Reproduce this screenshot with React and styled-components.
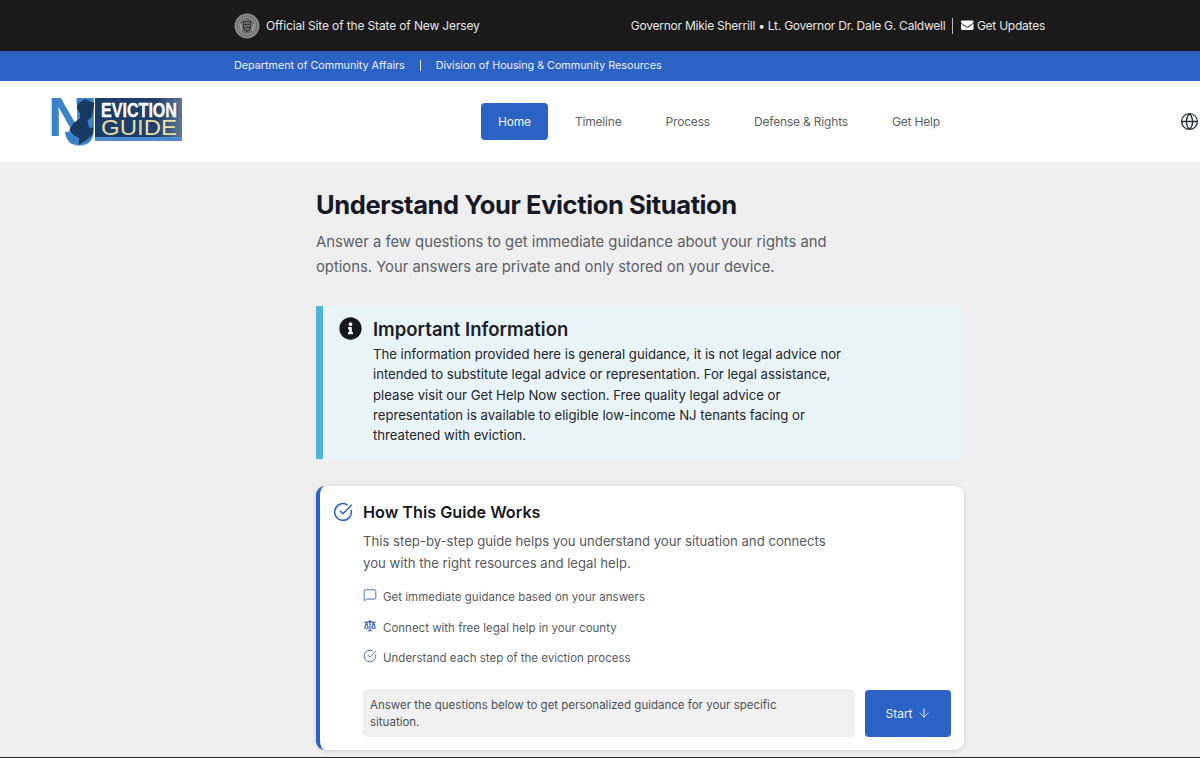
import React from "react";
import styled, { createGlobalStyle } from "styled-components";
import { CircleCheckBig, MessageSquare, Globe, ArrowDown } from "lucide-react";
import { HiOutlineScale } from "react-icons/hi";
import { FaEnvelope, FaInfoCircle } from "react-icons/fa";

const Global = createGlobalStyle`
  html, body { margin: 0; padding: 0; }
  body { font-family: Inter, "Liberation Sans", sans-serif; background: #efefef; color: #1b1e28; }
  * { box-sizing: border-box; }
`;
const Page = styled.div`
  height: 758px; overflow: hidden; display: flex; flex-direction: column; background: #efefef;
`;
const TopBar = styled.div`
  height: 51px; flex: none; background: #1a1a1a; color: #e6e6e6; display: flex; align-items: center;
  justify-content: space-between; padding: 0 155px 0 234px; font-size: 12px;
`;
const TopGroup = styled.div`display: flex; align-items: center; letter-spacing: ${p => p.$tight}px;`;
const SealWrap = styled.svg`width: 26px; height: 26px; margin-right: 6px; display: block;`;
const Divider = styled.span`width: 1px; height: 16px; background: #bbb; margin: 0 8px 0 7px;`;
const Updates = styled.span`display: inline-flex; align-items: center; gap: 3px; svg { font-size: 12.5px; color: #fff; }`;
const SubBar = styled.div`
  height: 30px; flex: none; background: #2b62c4; color: #e9f0fb; display: flex; align-items: center;
  padding: 0 0 1px 234px; font-size: 10.8px; letter-spacing: -0.03px;
`;
const SubSep = styled.span`width: 1px; height: 11px; background: #dfe8f7; margin: 0 15px 0 15px;`;
const NavBar = styled.header`
  height: 81px; flex: none; background: #fff; display: flex; align-items: center; padding: 0 1px 0 51px;
`;
const Logo = styled.svg`width: 132px; height: 50px; display: block; flex: none; overflow: visible;`;
const Nav = styled.nav`display: flex; align-items: center; gap: 10px; margin-left: 298px;`;
const NavItem = styled.a`
  height: 37px; padding: 0 17px; display: flex; align-items: center; font-size: 12px; letter-spacing: -0.18px; border-radius: 4px;
  color: ${p => (p.$active ? "#f2f6fd" : "#5c5f66")}; background: ${p => (p.$active ? "#2b62c4" : "transparent")};
`;
const GlobeBtn = styled.span`margin-left: auto; display: flex; color: #2a2d33;`;
const Main = styled.main`flex: 1; min-height: 0; width: 648px; margin-left: 316px; padding-top: 27px;`;
const H1 = styled.h1`font-size: 25.5px; line-height: 32px; font-weight: 700; letter-spacing: -0.4px; margin: 0 0 9px; color: #171a26;`;
const Lead = styled.p`font-size: 14.8px; line-height: 25px; margin: 0 0 26px; color: #5b5e66; width: 530px;`;
const InfoBox = styled.section`
  height: 153px; background: #e9f4f8; border-left: 7px solid #4fb4dc; padding: 11px 0 0 16px; display: flex; gap: 11px;
`;
const InfoIcon = styled.span`display: flex; font-size: 23px; color: #16181d; height: 23px;`;
const InfoTitle = styled.h2`font-size: 18.5px; line-height: 24px; font-weight: 600; margin: 0 0 3px; color: #1b1e28;`;
const InfoText = styled.p`font-size: 13.15px; line-height: 20.25px; margin: 0; width: 476px; color: #22252c;`;
const Card = styled.section`
  height: 264px; margin-top: 27px; background: #fff; border-left: 4px solid #2b62c4; border-radius: 9px;
  box-shadow: 0 1px 4px rgba(0,0,0,.14); padding: 13px 13px 0 13px; display: flex; gap: 10px;
`;
const CardIcon = styled.span`display: flex; color: #2b62c4; padding-top: 3px;`;
const CardBody = styled.div`flex: 1; min-width: 0;`;
const CardTitle = styled.h2`font-size: 16.2px; line-height: 26px; font-weight: 600; margin: 0 0 5px; color: #171a26;`;
const CardText = styled.p`font-size: 13.15px; line-height: 22px; margin: 0 0 8px; width: 480px; color: #565962;`;
const List = styled.ul`list-style: none; padding: 0; margin: 0;`;
const Item = styled.li`
  height: 30.5px; display: flex; align-items: center; gap: 6px; font-size: 11.5px; color: #565962;
`;
const ItemIcon = styled.span`display: flex; width: 14px; color: #2b62c4; margin-top: -4px; justify-content: center;`;
const Bottom = styled.div`display: flex; gap: 10px; margin-top: 15px;`;
const Note = styled.div`
  flex: 1; height: 48px; background: #f0f0f0; border-radius: 5px; padding: 8px 70px 7px 7px; font-size: 11.5px; line-height: 17px; color: #4d5058;
`;
const StartBtn = styled.button`
  width: 86px; height: 47px; margin-top: 1px; border: 0; border-radius: 4px; background: #2b62c4; color: #e9f0fb; font: inherit; font-size: 12px;
  display: flex; align-items: center; justify-content: center; gap: 4px;
`;
const BottomEdge = styled.div`height: 1px; flex: none; background: #2a2a2a;`;

const Seal = () => (
  <SealWrap viewBox="0 0 26 26">
    <circle cx="13" cy="13" r="12.5" fill="#8a8a8a" />
    <circle cx="13" cy="13" r="10" fill="none" stroke="#3d3d3d" strokeWidth="1" strokeDasharray="1 1" />
    <circle cx="13" cy="13" r="8" fill="#6e6e6e" />
    <path d="M9 8h8v6c0 3-2 4-4 5-2-1-4-2-4-5z" fill="#3b3b3b" />
    <path d="M6 11c1 2 1 5 2 7M20 11c-1 2-1 5-2 7" stroke="#b0b0b0" strokeWidth="1.3" fill="none" />
    <path d="M10 10h6M10 13h6M11 16h4" stroke="#a5a5a5" strokeWidth=".9" />
  </SealWrap>
);

const NjLogo = () => (
  <Logo viewBox="0 0 132 50">
    <defs>
      <linearGradient id="lg" x1="0" x2="1" y1="0" y2="0">
        <stop offset="0" stopColor="#1b3d68" />
        <stop offset=".7" stopColor="#1f3f69" />
        <stop offset="1" stopColor="#5d7795" />
      </linearGradient>
    </defs>
    <rect x="44" y="1" width="87" height="43" fill="#4f8ad0" />
    <rect x="44" y="1" width="87" height="39" fill="url(#lg)" />
    <text x="-3" y="39" fontFamily="Liberation Sans" fontWeight="700" fontSize="55" fill="#3b82c8" textLength="40" lengthAdjust="spacingAndGlyphs">N</text>
    <text x="13" y="48" fontFamily="Liberation Sans" fontWeight="700" fontSize="68" fill="#3b82c8" textLength="34" lengthAdjust="spacingAndGlyphs">J</text>
    <path d="M27.3 6.3L34 2l9.3 4-1 7-1.6 6.7-4.4 4.3 2 6.7h4l-1 7.3-5.6 5-6.7 4.3h-1.3l.6-6-6-3.3-4-5 4-6.7 6.7-5v-5l-3.3-5z" fill="#173a63" />
    <text x="50" y="19.5" fontFamily="Liberation Sans" fontWeight="700" fontSize="21" fill="#fff" stroke="#fff" strokeWidth=".3" textLength="76" lengthAdjust="spacingAndGlyphs">EVICTION</text>
    <text x="50" y="38" fontFamily="Liberation Sans" fontSize="22" fill="#e6dca6" textLength="76" lengthAdjust="spacingAndGlyphs">GUIDE</text>
  </Logo>
);

export default function App() {
  return (
    <>
      <Global />
      <Page>
        <TopBar>
          <TopGroup $tight={-0.14}><Seal />Official Site of the State of New Jersey</TopGroup>
          <TopGroup $tight={-0.24}>
            Governor Mikie Sherrill • Lt. Governor Dr. Dale G. Caldwell
            <Divider />
            <Updates><FaEnvelope />Get Updates</Updates>
          </TopGroup>
        </TopBar>
        <SubBar>Department of Community Affairs<SubSep />Division of Housing &amp; Community Resources</SubBar>
        <NavBar>
          <NjLogo />
          <Nav>
            <NavItem $active>Home</NavItem>
            <NavItem>Timeline</NavItem>
            <NavItem>Process</NavItem>
            <NavItem>Defense &amp; Rights</NavItem>
            <NavItem>Get Help</NavItem>
          </Nav>
          <GlobeBtn><Globe size={19} strokeWidth={1.6} /></GlobeBtn>
        </NavBar>
        <Main>
          <H1>Understand Your Eviction Situation</H1>
          <Lead>Answer a few questions to get immediate guidance about your rights and options. Your answers are private and only stored on your device.</Lead>
          <InfoBox>
            <InfoIcon><FaInfoCircle /></InfoIcon>
            <div>
              <InfoTitle>Important Information</InfoTitle>
              <InfoText>The information provided here is general guidance, it is not legal advice nor intended to substitute legal advice or representation. For legal assistance, please visit our Get Help Now section. Free quality legal advice or representation is available to eligible low-income NJ tenants facing or threatened with eviction.</InfoText>
            </div>
          </InfoBox>
          <Card>
            <CardIcon><CircleCheckBig size={20} strokeWidth={1.8} /></CardIcon>
            <CardBody>
              <CardTitle>How This Guide Works</CardTitle>
              <CardText>This step-by-step guide helps you understand your situation and connects you with the right resources and legal help.</CardText>
              <List>
                <Item><ItemIcon><MessageSquare size={14} strokeWidth={1.5} /></ItemIcon>Get immediate guidance based on your answers</Item>
                <Item><ItemIcon><HiOutlineScale size={15} /></ItemIcon>Connect with free legal help in your county</Item>
                <Item><ItemIcon><CircleCheckBig size={14} strokeWidth={1.5} /></ItemIcon>Understand each step of the eviction process</Item>
              </List>
              <Bottom>
                <Note>Answer the questions below to get personalized guidance for your specific situation.</Note>
                <StartBtn>Start <ArrowDown size={14} strokeWidth={1.6} /></StartBtn>
              </Bottom>
            </CardBody>
          </Card>
        </Main>
        <BottomEdge />
      </Page>
    </>
  );
}
